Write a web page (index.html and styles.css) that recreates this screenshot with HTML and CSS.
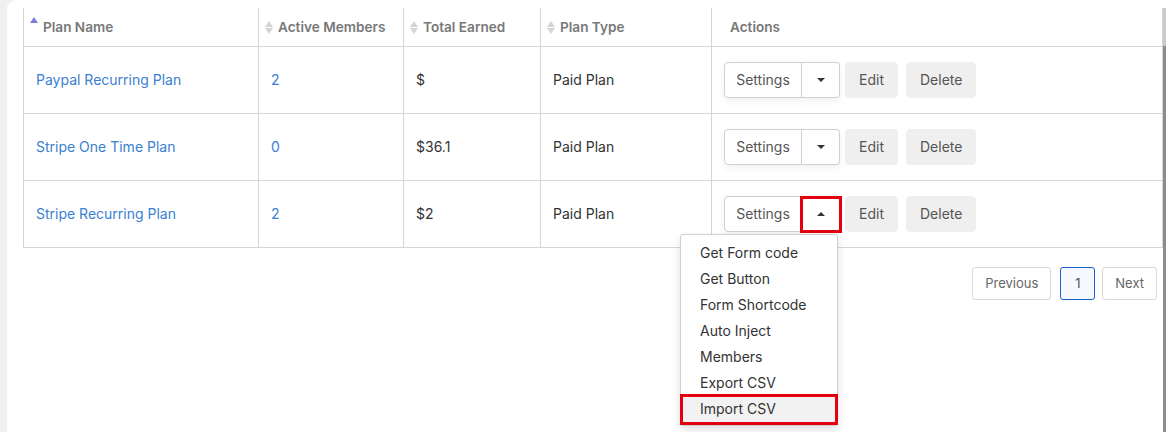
FILE: index.html
```html
<!DOCTYPE html>
<html lang="en">
<head>
  <meta charset="UTF-8" />
  <title>Plans</title>
  <link rel="stylesheet" href="styles.css">
</head>
<body>
  <div class="card">
    <div class="table-wrap">
      <table class="plans">
        <colgroup>
          <col class="c-name"><col class="c-members"><col class="c-earned"><col class="c-type"><col>
        </colgroup>
        <thead>
          <tr>
            <th><span class="sort asc"><i class="up"></i><i class="down"></i></span>Plan Name</th>
            <th><span class="sort"><i class="up"></i><i class="down"></i></span>Active Members</th>
            <th><span class="sort"><i class="up"></i><i class="down"></i></span>Total Earned</th>
            <th><span class="sort"><i class="up"></i><i class="down"></i></span>Plan Type</th>
            <th class="actions-head">Actions</th>
          </tr>
        </thead>
        <tbody>
          <tr>
            <td><a href="#">Paypal Recurring Plan</a></td>
            <td><a href="#">2</a></td>
            <td>$</td>
            <td>Paid Plan</td>
            <td>
              <div class="actions">
                <div class="btn-group">
                  <button class="btn">Settings</button>
                  <button class="btn caret-btn"><span class="caret"></span></button>
                </div>
                <button class="btn flat">Edit</button>
                <button class="btn flat">Delete</button>
              </div>
            </td>
          </tr>
          <tr>
            <td><a href="#">Stripe One Time Plan</a></td>
            <td><a href="#">0</a></td>
            <td>$36.1</td>
            <td>Paid Plan</td>
            <td>
              <div class="actions">
                <div class="btn-group">
                  <button class="btn">Settings</button>
                  <button class="btn caret-btn"><span class="caret"></span></button>
                </div>
                <button class="btn flat">Edit</button>
                <button class="btn flat">Delete</button>
              </div>
            </td>
          </tr>
          <tr>
            <td><a href="#">Stripe Recurring Plan</a></td>
            <td><a href="#">2</a></td>
            <td>$2</td>
            <td>Paid Plan</td>
            <td>
              <div class="actions">
                <div class="btn-group open">
                  <button class="btn">Settings</button>
                  <button class="btn caret-btn marked"><span class="caret up"></span></button>
                  <ul class="menu">
                    <li>Get Form code</li>
                    <li>Get Button</li>
                    <li>Form Shortcode</li>
                    <li>Auto Inject</li>
                    <li>Members</li>
                    <li>Export CSV</li>
                    <li class="active marked">Import CSV</li>
                  </ul>
                </div>
                <button class="btn flat">Edit</button>
                <button class="btn flat">Delete</button>
              </div>
            </td>
          </tr>
        </tbody>
      </table>
      <div class="scrollbar"><div class="thumb"></div></div>
    </div>

    <div class="pager">
      <button class="page">Previous</button>
      <button class="page current">1</button>
      <button class="page">Next</button>
    </div>
  </div>
</body>
</html>
```

FILE: styles.css
```css
* {
  box-sizing: border-box;
}

body {
  margin: 0;
  background: #f0f0f0;
  font-family: Inter, "Noto Sans", sans-serif;
  font-size: 14px;
  color: #333;
  height: 432px;
  overflow: hidden;
}

.card {
  margin-left: 7px;
  height: 432px;
  background: #fff;
  border-top-left-radius: 9px;
  padding: 8px 0 0 16px;
}

.table-wrap {
  position: relative;
  width: 1143px;
}

.plans {
  width: 1140px;
  border-collapse: collapse;
  table-layout: fixed;
}

.c-name { width: 235px; }
.c-members { width: 145px; }
.c-earned { width: 137px; }
.c-type { width: 171px; }

.plans th {
  height: 38px;
  text-align: left;
  font-size: 13.6px;
  font-weight: 600;
  color: #787878;
  padding: 0 6px;
  border-left: 1px solid #d6d6d6;
  border-right: 1px solid #d6d6d6;
  border-bottom: 1px solid #d6d6d6;
  white-space: nowrap;
}

.plans th.actions-head {
  padding-left: 18px;
}

.sort {
  display: inline-flex;
  flex-direction: column;
  gap: 1px;
  vertical-align: middle;
  margin: -2px 5px 0 0;
}

.sort i {
  display: block;
  width: 0;
  height: 0;
  border-left: 4px solid transparent;
  border-right: 4px solid transparent;
}

.sort .up { border-bottom: 6px solid #d4d4d4; }
.sort .down { border-top: 6px solid #d4d4d4; }

.sort.asc { margin-top: -10px; }
.sort.asc .up { border-bottom-color: #7b7fdc; }
.sort.asc .down { border-top-color: transparent; }

.plans td {
  height: 67px;
  padding: 0 12px;
  border: 1px solid #d6d6d6;
}

.plans a {
  color: #3a80d2;
  text-decoration: none;
}

.actions {
  display: flex;
  align-items: center;
}

.btn {
  font-family: inherit;
  font-size: 14px;
  color: #555;
  height: 36px;
  padding: 0 13px;
  border: 1px solid #cfcfcf;
  background: #fff;
  border-radius: 4px;
  cursor: pointer;
}

.btn-group {
  position: relative;
  display: flex;
  border-radius: 4px;
  box-shadow: 0 3px 8px rgba(0, 0, 0, 0.06);
}

.btn-group .btn:first-child {
  width: 78px;
  padding: 0;
  border-radius: 4px 0 0 4px;
}

.caret-btn {
  position: relative;
  width: 38px;
  border-left: none;
  border-radius: 0 4px 4px 0;
  display: flex;
  align-items: center;
  justify-content: center;
}

.caret {
  width: 0;
  height: 0;
  border-left: 4.5px solid transparent;
  border-right: 4.5px solid transparent;
  border-top: 4.5px solid #333;
}

.caret.up {
  border-top: none;
  border-bottom: 4.5px solid #333;
}

.marked::after {
  content: "";
  position: absolute;
  border: 3px solid #e4000f;
  pointer-events: none;
}

.caret-btn.marked::after {
  top: -1px;
  bottom: -2px;
  left: -2px;
  right: -3px;
}

.flat {
  background: #efefef;
  border-color: #efefef;
  margin-left: 5px;
}

.flat + .flat {
  margin-left: 8px;
}

.menu {
  position: absolute;
  top: 38px;
  left: -44px;
  width: 158px;
  margin: 0;
  padding: 5px 0 3px;
  list-style: none;
  background: #fff;
  border: 1px solid #cfcfcf;
  border-radius: 3px;
  box-shadow: 0 4px 10px rgba(0, 0, 0, 0.12);
  z-index: 2;
}

.menu li {
  position: relative;
  height: 26px;
  line-height: 26px;
  padding-left: 19px;
  color: #333;
  white-space: nowrap;
}

.menu li.active {
  background: #f2f2f2;
}

.menu li.marked::after {
  top: -2px;
  bottom: -3px;
  left: -1px;
  right: -1px;
}

.scrollbar {
  position: absolute;
  top: 0;
  right: 0;
  width: 3px;
  height: 424px;
  background: #c9c9c9;
}

.scrollbar .thumb {
  margin-top: 38px;
  height: 386px;
  background: #8c8c8c;
}

.pager {
  display: flex;
  justify-content: flex-end;
  width: 1134px;
  margin-top: 19px;
}

.page {
  font-family: inherit;
  font-size: 13px;
  color: #666;
  height: 33px;
  padding: 0 12px;
  background: #fff;
  border: 1px solid #d8d8d8;
  border-radius: 3px;
}

.page.current {
  width: 35px;
  padding: 0;
  margin: 0 7px 0 9px;
  border-color: #1a5fd0;
  background: #f6f9ff;
  color: #555;
}
```
